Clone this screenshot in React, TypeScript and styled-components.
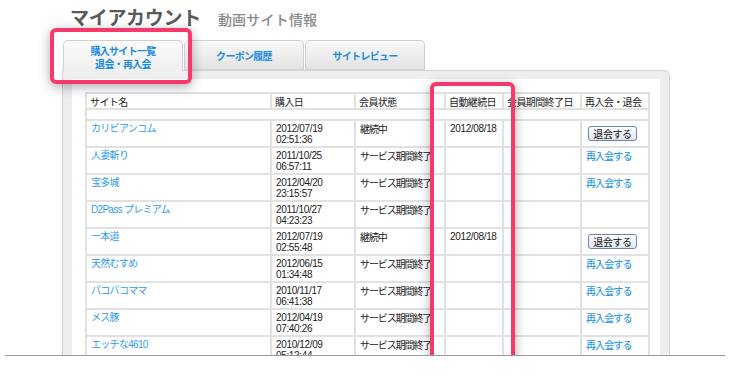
import React from "react";
import styled, { createGlobalStyle } from "styled-components";

const GlobalStyle = createGlobalStyle`
  html, body { margin: 0; padding: 0; background: #ffffff; }
  body { font-family: "Liberation Sans", "Noto Sans CJK JP", sans-serif; }
`;

const Page = styled.div`
  position: relative;
  width: 720px;
  height: 355px;
  margin-left: 5px;
  overflow: hidden;
  border-bottom: 1px solid #9a9a9a;
  background: #ffffff;
`;

const Header = styled.div`
  display: flex;
  align-items: baseline;
  gap: 17px;
  height: 40px;
  box-sizing: border-box;
  padding: 5px 0 0 65px;
`;

const Title = styled.h1`
  margin: 0;
  font-family: "Noto Sans CJK JP", sans-serif;
  font-size: 19px;
  line-height: 24px;
  font-weight: 700;
  color: #5a5a5a;
  letter-spacing: -0.3px;
`;

const Subtitle = styled.span`
  font-family: "Noto Sans CJK JP", sans-serif;
  font-size: 14px;
  font-weight: 500;
  color: #8a8a8a;
  letter-spacing: 0.2px;
`;

const TabRow = styled.div`
  display: flex;
  gap: 1px;
  margin-left: 58px;
  height: 30px;
  position: relative;
  z-index: 1;
`;

const Tab = styled.div<{ $active?: boolean }>`
  width: 120px;
  height: ${(p) => (p.$active ? "31px" : "30px")};
  box-sizing: border-box;
  border: 1px solid #cfcfcf;
  border-bottom: ${(p) => (p.$active ? "none" : "1px solid #d3d3d3")};
  border-radius: 5px 5px 0 0;
  background: ${(p) =>
    p.$active
      ? "linear-gradient(#fbfbfb, #efefef)"
      : "linear-gradient(#f9f9f9, #e2e2e2)"};
  display: flex;
  flex-direction: column;
  align-items: center;
  justify-content: center;
  padding-top: 1px;
  font-family: "Noto Sans CJK JP", sans-serif;
  font-size: 10px;
  line-height: 13px;
  font-weight: 700;
  letter-spacing: -0.7px;
  color: #1c8ae4;
`;

const Panel = styled.div`
  margin-left: 57px;
  width: 608px;
  height: 300px;
  box-sizing: border-box;
  border: 1px solid #d3d3d3;
  border-radius: 0 6px 0 0;
  background: #eeeeee;
  padding: 8px 9px 0 9px;
`;

const Inner = styled.div`
  background: #ffffff;
  height: 100%;
  padding: 13px 12px 0 13px;
`;

const Table = styled.table`
  width: 563px;
  table-layout: fixed;
  border-collapse: collapse;
  border: 2px solid #e1e1e1;
`;

const Th = styled.th`
  height: 12px;
  padding: 2px 3px 0 3px;
  border: 2px solid #e1e1e1;
  text-align: left;
  vertical-align: top;
  font-family: "Noto Sans CJK JP", sans-serif;
  font-weight: 400;
  font-size: 10px;
  line-height: 12px;
  letter-spacing: -0.6px;
  color: #222;
  white-space: nowrap;
  overflow: visible;
`;

const SpacerCell = styled.td`
  height: 9px;
  padding: 0;
  border: 2px solid #e1e1e1;
`;

const Td = styled.td`
  height: 23px;
  padding: 2px 3px 0 4px;
  border: 2px solid #e1e1e1;
  vertical-align: top;
  white-space: nowrap;
  overflow: hidden;
`;

const SiteLink = styled.a`
  font-family: "Liberation Sans", "Noto Sans CJK JP", sans-serif;
  font-size: 10px;
  line-height: 12px;
  letter-spacing: -0.7px;
  color: #2f9bef;
  text-decoration: none;
  display: block;
`;

const DateText = styled.div`
  font-family: "Liberation Sans", sans-serif;
  font-size: 10px;
  line-height: 11px;
  letter-spacing: -0.35px;
  color: #222;
`;

const Status = styled.div`
  font-family: "Noto Sans CJK JP", sans-serif;
  font-size: 10px;
  line-height: 12px;
  letter-spacing: -1.1px;
  color: #222;
`;

const RejoinLink = styled.a`
  display: block;
  font-family: "Noto Sans CJK JP", sans-serif;
  font-size: 10px;
  line-height: 12px;
  font-weight: 500;
  letter-spacing: -0.9px;
  color: #2f9bef;
  text-decoration: none;
`;

const WithdrawButton = styled.button`
  display: block;
  margin: 3px 0 0 2px;
  width: 49px;
  height: 15px;
  padding: 0;
  border: 1px solid #6f84aa;
  border-radius: 3px;
  background: linear-gradient(#ffffff, #dfe4ee);
  font-family: "Noto Sans CJK JP", sans-serif;
  font-size: 10px;
  line-height: 13px;
  letter-spacing: -0.4px;
  color: #111;
`;

const Highlight = styled.div<{ $left: number; $top: number; $w: number; $h: number }>`
  position: absolute;
  left: ${(p) => p.$left}px;
  top: ${(p) => p.$top}px;
  width: ${(p) => p.$w}px;
  height: ${(p) => p.$h}px;
  box-sizing: border-box;
  border: 4px solid #f8386b;
  border-radius: 6px;
  box-shadow: 0 3px 12px rgba(0, 0, 0, 0.32);
  z-index: 5;
  pointer-events: none;
`;

type Row = {
  name: string;
  date: [string, string];
  status: string;
  auto?: string;
  action?: "withdraw" | "rejoin";
};

const rows: Row[] = [
  { name: "カリビアンコム", date: ["2012/07/19", "02:51:36"], status: "継続中", auto: "2012/08/18", action: "withdraw" },
  { name: "人妻斬り", date: ["2011/10/25", "06:57:11"], status: "サービス期間終了", action: "rejoin" },
  { name: "宝多城", date: ["2012/04/20", "23:15:57"], status: "サービス期間終了", action: "rejoin" },
  { name: "D2Pass プレミアム", date: ["2011/10/27", "04:23:23"], status: "サービス期間終了" },
  { name: "一本道", date: ["2012/07/19", "02:55:48"], status: "継続中", auto: "2012/08/18", action: "withdraw" },
  { name: "天然むすめ", date: ["2012/06/15", "01:34:48"], status: "サービス期間終了", action: "rejoin" },
  { name: "パコパコママ", date: ["2010/11/17", "06:41:38"], status: "サービス期間終了", action: "rejoin" },
  { name: "メス豚", date: ["2012/04/19", "07:40:26"], status: "サービス期間終了", action: "rejoin" },
  { name: "エッチな4610", date: ["2010/12/09", "05:12:44"], status: "サービス期間終了", action: "rejoin" },
];

const columns = [
  { label: "サイト名", width: 185 },
  { label: "購入日", width: 84 },
  { label: "会員状態", width: 90 },
  { label: "自動継続日", width: 58 },
  { label: "会員期間終了日", width: 78 },
  { label: "再入会・退会", width: 68 },
];

export default function App() {
  return (
    <>
      <GlobalStyle />
      <Page>
        <Header>
          <Title>マイアカウント</Title>
          <Subtitle>動画サイト情報</Subtitle>
        </Header>
        <TabRow>
          <Tab $active>
            <span>購入サイト一覧</span>
            <span>退会・再入会</span>
          </Tab>
          <Tab>クーポン履歴</Tab>
          <Tab>サイトレビュー</Tab>
        </TabRow>
        <Panel>
          <Inner>
            <Table>
              <colgroup>
                {columns.map((c) => (
                  <col key={c.label} style={{ width: c.width }} />
                ))}
              </colgroup>
              <thead>
                <tr>
                  {columns.map((c) => (
                    <Th key={c.label}>{c.label}</Th>
                  ))}
                </tr>
              </thead>
              <tbody>
                <tr>
                  <SpacerCell colSpan={6} />
                </tr>
                {rows.map((r) => (
                  <tr key={r.name}>
                    <Td>
                      <SiteLink href="#">{r.name}</SiteLink>
                    </Td>
                    <Td>
                      <DateText>{r.date[0]}</DateText>
                      <DateText>{r.date[1]}</DateText>
                    </Td>
                    <Td>
                      <Status>{r.status}</Status>
                    </Td>
                    <Td>{r.auto && <DateText>{r.auto}</DateText>}</Td>
                    <Td />
                    <Td>
                      {r.action === "withdraw" && <WithdrawButton>退会する</WithdrawButton>}
                      {r.action === "rejoin" && <RejoinLink href="#">再入会する</RejoinLink>}
                    </Td>
                  </tr>
                ))}
              </tbody>
            </Table>
          </Inner>
        </Panel>
        <Highlight $left={45} $top={28} $w={142} $h={56} />
        <Highlight $left={425} $top={82} $w={85} $h={320} />
      </Page>
    </>
  );
}
